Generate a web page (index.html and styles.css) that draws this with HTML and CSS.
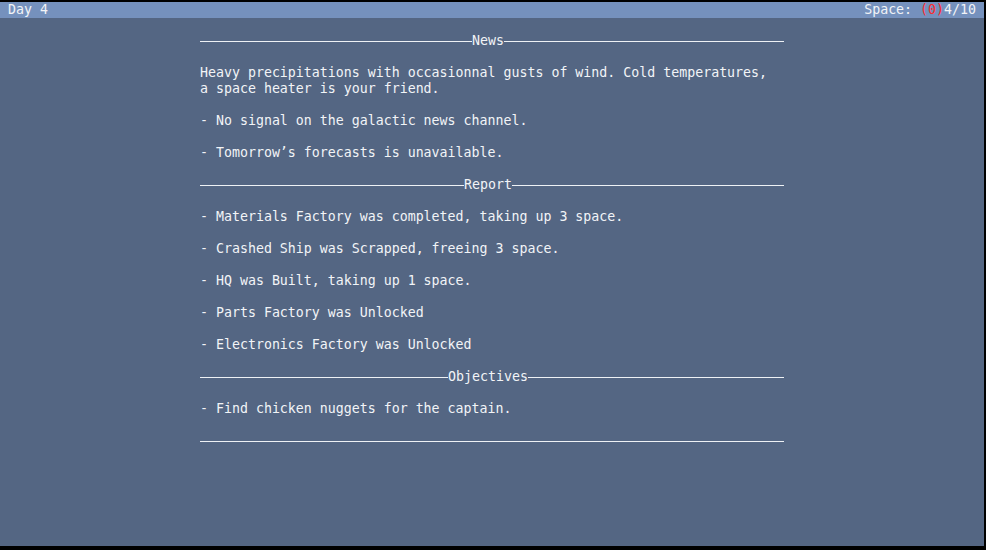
FILE: index.html
```html
<!DOCTYPE html>
<html>
<head>
<meta charset="utf-8">
<link rel="stylesheet" href="styles.css">
</head>
<body>
<div class="app">
  <div class="topbar">
    <span>Day 4</span>
    <span>Space: <span class="red">(0)</span>4/10</span>
  </div>
  <div class="content">
    <div class="sep"><span class="l"></span><span class="t">News</span><span class="r"></span></div>
    <p>Heavy precipitations with occasionnal gusts of wind. Cold temperatures,<br>a space heater is your friend.</p>
    <p>- No signal on the galactic news channel.</p>
    <p>- Tomorrow’s forecasts is unavailable.</p>
    <div class="sep"><span class="l"></span><span class="t">Report</span><span class="r"></span></div>
    <p>- Materials Factory was completed, taking up 3 space.</p>
    <p>- Crashed Ship was Scrapped, freeing 3 space.</p>
    <p>- HQ was Built, taking up 1 space.</p>
    <p>- Parts Factory was Unlocked</p>
    <p>- Electronics Factory was Unlocked</p>
    <div class="sep"><span class="l"></span><span class="t">Objectives</span><span class="r"></span></div>
    <p>- Find chicken nuggets for the captain.</p>
    <div class="sep"><span class="l"></span></div>
  </div>
</div>
</body>
</html>
```
FILE: styles.css
```css
html, body {
  margin: 0;
  padding: 0;
  background: #000;
}
body {
  width: 986px;
  height: 550px;
  overflow: hidden;
}
.app {
  margin: 2px 2px 4px 0;
  width: 984px;
  height: 544px;
  background: #546683;
  font-family: "DejaVu Sans Mono", "Liberation Mono", monospace;
  font-size: 13.28px;
  line-height: 16px;
  color: #f2f4f7;
}
.topbar {
  height: 16px;
  background: #7591bd;
  display: flex;
  justify-content: space-between;
  padding: 0 8px;
}
.red { color: #ff2a2a; }
.content {
  width: 584px;
  margin: 15px 0 0 200px;
}
.content p {
  margin: 15px 0 0;
  padding-top: 1px;
  white-space: pre;
}
.sep {
  display: flex;
  align-items: center;
  height: 16px;
  margin-top: 16px;
}
.sep:first-child {
  margin-top: 0;
}
.sep .l, .sep .r {
  flex: 1 1 0;
  height: 1px;
  background: #eef1f5;
}
.sep .r {
  padding-left: 8px;
}
.sep .t {
  flex: none;
}
```
